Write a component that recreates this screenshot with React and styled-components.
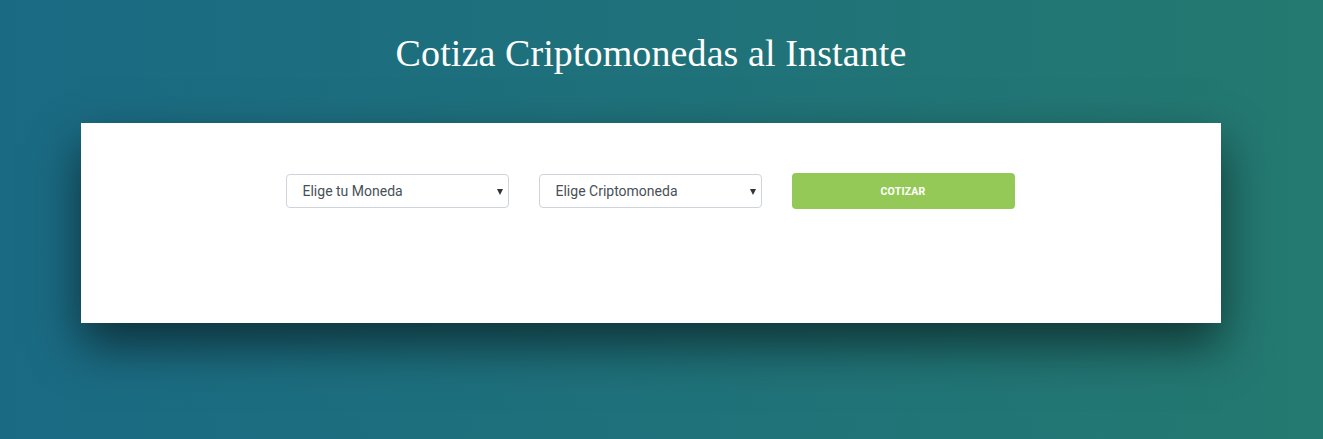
import React, { useState } from "react";
import styled, { createGlobalStyle } from "styled-components";

const GlobalStyle = createGlobalStyle`
    html, body {
        margin: 0;
        padding: 0;
        height: 100%;
    }
    body {
        background: linear-gradient(to right, #1a6a84, #247970);
        font-family: Roboto, "Liberation Sans", sans-serif;
        min-height: 439px;
    }
`

const Page = styled.div`
    display: flex;
    flex-direction: column;
    align-items: center;
    padding: 31px 21px 0 0;
`

const Title = styled.h1`
    margin: 0 0 47px;
    font-family: "Liberation Serif", "DejaVu Serif", serif;
    font-weight: 400;
    font-size: 38px;
    line-height: 45px;
    color: #fff;
    letter-spacing: 0.1px;
`

const Card = styled.div`
    width: 1140px;
    height: 200px;
    box-sizing: border-box;
    background-color: #fff;
    padding-top: 50px;
    box-shadow: 0 22px 45px rgba(0, 0, 0, 0.55);
`

const Form = styled.form`
    display: flex;
    flex-direction: row;
    justify-content: center;
    align-items: flex-start;
    gap: 30px;
    padding-right: 2px;
`

const SelectWrap = styled.div`
    position: relative;
    width: 223px;
    margin-top: 1px;
    &::after{
        content: "";
        position: absolute;
        right: 6px;
        top: 15px;
        border-left: 3.5px solid transparent;
        border-right: 3.5px solid transparent;
        border-top: 6px solid #333;
        pointer-events: none;
    }
`

const Select = styled.select`
    appearance: none;
    width: 100%;
    height: 34px;
    box-sizing: border-box;
    padding: 0 20px 0 16px;
    border: 1px solid #ced4da;
    border-radius: 4px;
    background-color: #fff;
    font-family: Roboto, "Liberation Sans", sans-serif;
    font-size: 14px;
    color: #495057;
    outline: none;
`

const Button = styled.button`
    width: 223px;
    height: 36px;
    border: none;
    border-radius: 4px;
    background-color: #95c957;
    color: #fff;
    font-family: Roboto, "Liberation Sans", sans-serif;
    font-size: 10.5px;
    font-weight: 700;
    text-transform: uppercase;
    letter-spacing: 0.2px;
    cursor: pointer;
`

export default function App() {
    const [moneda, setMoneda] = useState("");
    const [cripto, setCripto] = useState("");

    return (
        <>
            <GlobalStyle />
            <Page>
                <Title>Cotiza Criptomonedas al Instante</Title>
                <Card>
                    <Form onSubmit={e => e.preventDefault()}>
                        <SelectWrap>
                            <Select value={moneda} onChange={e => setMoneda(e.target.value)}>
                                <option value="">Elige tu Moneda</option>
                                <option value="USD">Dolar Estadounidense</option>
                                <option value="MXN">Peso Mexicano</option>
                                <option value="EUR">Euro</option>
                            </Select>
                        </SelectWrap>
                        <SelectWrap>
                            <Select value={cripto} onChange={e => setCripto(e.target.value)}>
                                <option value="">Elige Criptomoneda</option>
                                <option value="BTC">Bitcoin</option>
                                <option value="ETH">Ethereum</option>
                            </Select>
                        </SelectWrap>
                        <Button type="submit">Cotizar</Button>
                    </Form>
                </Card>
            </Page>
        </>
    )
}
